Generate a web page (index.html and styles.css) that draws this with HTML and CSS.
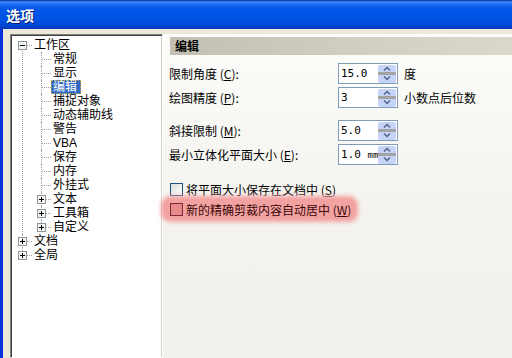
FILE: index.html
```
<!DOCTYPE html>
<html lang="zh-CN">
<head>
    <meta charset="UTF-8">
    <title>选项</title>
    <link rel="stylesheet" href="styles.css">
</head>
<body>
    <div class="window">
        <div class="titlebar"><span class="title">选项</span></div>
        <div class="client">
            <!-- 左侧树 -->
            <div class="tree">
                <ul class="tree-root">
                    <li class="first">
                        <div class="node">
                            <svg class="exp" width="9" height="9"><rect x="0.5" y="0.5" width="8" height="8" fill="#F4F4F0" stroke="#8C97A3"/><path d="M2 4.5h5" stroke="#000"/></svg>
                            <span class="label">工作区</span>
                        </div>
                        <ul class="sub">
                            <li><div class="node"><span class="leaf"></span><span class="label">常规</span></div></li>
                            <li><div class="node"><span class="leaf"></span><span class="label">显示</span></div></li>
                            <li><div class="node"><span class="leaf"></span><span class="label selected">编辑</span></div></li>
                            <li><div class="node"><span class="leaf"></span><span class="label">捕捉对象</span></div></li>
                            <li><div class="node"><span class="leaf"></span><span class="label">动态辅助线</span></div></li>
                            <li><div class="node"><span class="leaf"></span><span class="label">警告</span></div></li>
                            <li><div class="node"><span class="leaf"></span><span class="label">VBA</span></div></li>
                            <li><div class="node"><span class="leaf"></span><span class="label">保存</span></div></li>
                            <li><div class="node"><span class="leaf"></span><span class="label">内存</span></div></li>
                            <li><div class="node"><span class="leaf"></span><span class="label">外挂式</span></div></li>
                            <li><div class="node">
                                <svg class="exp" width="9" height="9"><rect x="0.5" y="0.5" width="8" height="8" fill="#F4F4F0" stroke="#8C97A3"/><path d="M2 4.5h5M4.5 2v5" stroke="#000"/></svg>
                                <span class="label">文本</span></div></li>
                            <li><div class="node">
                                <svg class="exp" width="9" height="9"><rect x="0.5" y="0.5" width="8" height="8" fill="#F4F4F0" stroke="#8C97A3"/><path d="M2 4.5h5M4.5 2v5" stroke="#000"/></svg>
                                <span class="label">工具箱</span></div></li>
                            <li class="last"><div class="node">
                                <svg class="exp" width="9" height="9"><rect x="0.5" y="0.5" width="8" height="8" fill="#F4F4F0" stroke="#8C97A3"/><path d="M2 4.5h5M4.5 2v5" stroke="#000"/></svg>
                                <span class="label">自定义</span></div></li>
                        </ul>
                    </li>
                    <li><div class="node">
                        <svg class="exp" width="9" height="9"><rect x="0.5" y="0.5" width="8" height="8" fill="#F4F4F0" stroke="#8C97A3"/><path d="M2 4.5h5M4.5 2v5" stroke="#000"/></svg>
                        <span class="label">文档</span></div></li>
                    <li class="last"><div class="node">
                        <svg class="exp" width="9" height="9"><rect x="0.5" y="0.5" width="8" height="8" fill="#F4F4F0" stroke="#8C97A3"/><path d="M2 4.5h5M4.5 2v5" stroke="#000"/></svg>
                        <span class="label">全局</span></div></li>
                </ul>
            </div>

            <!-- 右侧页面 -->
            <div class="panel">
                <div class="panel-head">编辑</div>

                <div class="form">
                    <span class="field-label">限制角度 (<u>C</u>):</span>
                    <div class="spin"><span class="spin-value">15.0</span>
                        <svg width="18" height="18"><rect x="0" y="0" width="18" height="18" rx="2" fill="#C6D5F7"/><rect x="0" y="7" width="18" height="3" fill="#A3A3A3"/><path d="M6 5.5l3-3 3 3M6 11.5l3 3 3-3" fill="none" stroke="#4D6185" stroke-width="1.4"/></svg>
                    </div>
                    <span class="unit">度</span>

                    <span class="field-label">绘图精度 (<u>P</u>):</span>
                    <div class="spin"><span class="spin-value">3</span>
                        <svg width="18" height="18"><rect x="0" y="0" width="18" height="18" rx="2" fill="#C6D5F7"/><rect x="0" y="7" width="18" height="3" fill="#A3A3A3"/><path d="M6 5.5l3-3 3 3M6 11.5l3 3 3-3" fill="none" stroke="#4D6185" stroke-width="1.4"/></svg>
                    </div>
                    <span class="unit">小数点后位数</span>
                </div>

                <div class="form group2">
                    <span class="field-label">斜接限制 (<u>M</u>):</span>
                    <div class="spin"><span class="spin-value">5.0</span>
                        <svg width="18" height="18"><rect x="0" y="0" width="18" height="18" rx="2" fill="#C6D5F7"/><rect x="0" y="7" width="18" height="3" fill="#A3A3A3"/><path d="M6 5.5l3-3 3 3M6 11.5l3 3 3-3" fill="none" stroke="#4D6185" stroke-width="1.4"/></svg>
                    </div>
                    <span class="unit"></span>

                    <span class="field-label">最小立体化平面大小 (<u>E</u>):</span>
                    <div class="spin"><span class="spin-value">1.0 <small>mm</small></span>
                        <svg width="18" height="18"><rect x="0" y="0" width="18" height="18" rx="2" fill="#C6D5F7"/><rect x="0" y="7" width="18" height="3" fill="#A3A3A3"/><path d="M6 5.5l3-3 3 3M6 11.5l3 3 3-3" fill="none" stroke="#4D6185" stroke-width="1.4"/></svg>
                    </div>
                    <span class="unit"></span>
                </div>

                <div class="checks">
                    <div class="check-row"><span class="box"></span>将平面大小保存在文档中 (<u>S</u>)</div>
                    <div class="check-row marked"><span class="box"></span>新的精确剪裁内容自动居中 (<u>W</u>)</div>
                </div>
            </div>
        </div>
    </div>
</body>
</html>
```

FILE: styles.css
```
body {
    margin: 0;
    font-family: "Noto Sans CJK SC", "Liberation Sans", sans-serif;
    font-size: 12px;
    color: #000;
    overflow: hidden;
}
.window {
    width: 512px;
    height: 358px;
    display: flex;
    flex-direction: column;
    background: #0831D9;
}
.titlebar {
    height: 29px;
    flex: none;
    background: linear-gradient(#0A2A9C 0, #3D8BFA 2px, #1462F0 5px, #0055E8 10px, #0052E4 20px, #0046D2 26px, #0A34B8 29px);
    display: flex;
    align-items: center;
    padding-left: 6px;
}
.title {
    color: #fff;
    font-weight: bold;
    font-size: 14px;
    line-height: 16px;
    text-shadow: 1px 1px 0 #0A1E6E;
}
.client {
    flex: 1;
    margin-left: 3px;
    background: #ECE9D8;
    display: flex;
    padding: 5px 0 0 7px;
    min-height: 0;
}

/* árvore */
.tree {
    width: 144px;
    flex: none;
    background: #fff;
    border: 1px solid;
    border-color: #808080 #fff #fff #808080;
    box-shadow: inset 1px 1px 0 #404040, inset -1px 0 0 #D4D0C8;
    padding: 3px 0 0 7px;
    font-family: "Liberation Sans", "Noto Sans CJK SC", sans-serif;
}
.tree ul {
    list-style: none;
    margin: 0;
    padding: 0;
}
.tree li {
    position: relative;
}
.tree li::before {
    content: "";
    position: absolute;
    left: 4px;
    top: 0;
    bottom: 0;
    border-left: 1px dotted #A0A0A0;
}
.tree li.first::before {
    top: 7px;
}
.tree li.last::before {
    bottom: auto;
    height: 7px;
}
.sub {
    margin-left: 19px !important;
}
.node {
    position: relative;
    height: 14px;
    display: flex;
    align-items: center;
}
.node::before {
    content: "";
    position: absolute;
    left: 5px;
    top: 7px;
    width: 9px;
    border-top: 1px dotted #A0A0A0;
}
.exp {
    position: relative;
    z-index: 1;
    flex: none;
    display: block;
    margin-right: 7px;
}
.leaf {
    width: 9px;
    flex: none;
    margin-right: 7px;
}
.label {
    position: relative;
    line-height: 14px;
    white-space: nowrap;
}
.selected {
    background: #316AC5;
    color: #fff;
    padding: 0 4px 0 2px;
    margin-left: -2px;
    outline: 1px dotted #C9A74E;
    outline-offset: -1px;
}

/* página da direita */
.panel {
    flex: 1;
    background: linear-gradient(#FCFCFA, #F3F2ED 60%, #F2F1EC);
    padding: 3px 0 0 6px;
}
.panel-head {
    height: 18px;
    line-height: 18px;
    margin-left: 1px;
    padding-left: 5px;
    font-weight: bold;
    background: linear-gradient(to right, #C3C0B3, #D3D0C3 60%, #DAD7CB);
}
.form {
    display: grid;
    grid-template-columns: 169px 60px auto;
    grid-auto-rows: 21px;
    row-gap: 3px;
    margin-top: 8px;
    align-items: center;
}
.group2 {
    margin-top: 12px;
}
.field-label {
    white-space: nowrap;
}
.spin {
    height: 21px;
    box-sizing: border-box;
    border: 1px solid #7F9DB9;
    background: #fff;
    display: flex;
    align-items: center;
    justify-content: space-between;
    padding: 0 1px 0 2px;
}
.spin svg {
    display: block;
}
.spin-value {
    font-family: "DejaVu Sans Mono", "Liberation Mono", monospace;
    font-size: 11px;
    white-space: nowrap;
}
.spin-value small {
    font-size: 9px;
}
.unit {
    margin-left: 6px;
    white-space: nowrap;
}
.checks {
    margin-top: 16px;
    display: flex;
    flex-direction: column;
    gap: 4px;
}
.check-row {
    height: 16px;
    display: flex;
    align-items: center;
    white-space: nowrap;
    align-self: flex-start;
}
.box {
    width: 11px;
    height: 11px;
    border: 1px solid #1C5180;
    background: linear-gradient(135deg, #DCDCD7, #FFFFFF);
    margin: 0 3px 0 1px;
}
.marked {
    background: #F3A2A2;
    box-shadow: 0 0 4px 3px #F3A2A2;
    border-radius: 6px;
    padding: 2px 4px 2px 5px;
    margin: -2px 0 0 -5px;
    color: #3A0808;
}
.marked .box {
    border-color: #7A2A3A;
    background: #E98A8A;
}
```
